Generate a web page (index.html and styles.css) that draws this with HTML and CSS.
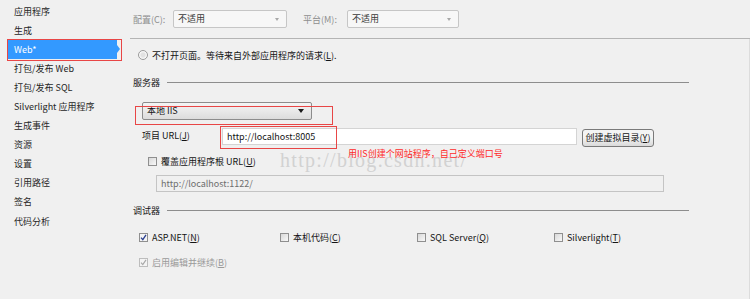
FILE: index.html
```html
<!DOCTYPE html>
<html lang="zh-CN">
<head>
  <meta charset="UTF-8">
  <title>Web 属性</title>
  <link rel="stylesheet" href="styles.css">
</head>
<body>
  <div class="page">
    <ul class="nav">
      <li>应用程序</li>
      <li>生成</li>
      <li class="active">Web*</li>
      <li>打包/发布 Web</li>
      <li>打包/发布 SQL</li>
      <li>Silverlight 应用程序</li>
      <li>生成事件</li>
      <li>资源</li>
      <li>设置</li>
      <li>引用路径</li>
      <li>签名</li>
      <li>代码分析</li>
    </ul>

    <div class="main">
      <div class="topbar">
        <span class="dim-label cfg-label">配置(C):</span>
        <div class="combo combo-off cfg-combo">不适用<span class="caret-off"></span></div>
        <span class="dim-label plat-label">平台(M):</span>
        <div class="combo combo-off plat-combo">不适用<span class="caret-off"></span></div>
      </div>

      <div class="pane">
        <div class="row radio-row"><span class="radio"></span>不打开页面。等待来自外部应用程序的请求(<u>L</u>).</div>

        <div class="group server-group"><span>服务器</span><div class="rule"></div></div>

        <div class="combo server-combo">本地 IIS<span class="caret"></span></div>

        <div class="url-row">
          <span class="url-label">项目 URL(<u>J</u>)</span>
          <div class="textbox url-box">http://localhost:8005</div>
          <div class="btn">创建虚拟目录(<u>Y</u>)</div>
        </div>

        <div class="row override-row"><span class="check"></span>覆盖应用程序根 URL(<u>U</u>)</div>

        <div class="textbox textbox-off root-box">http://localhost:1122/</div>

        <div class="group debug-group"><span>调试器</span><div class="rule"></div></div>

        <div class="debuggers">
          <div class="row"><span class="check check-on"><svg viewBox="0 0 9 9" width="9" height="9"><polyline points="2,4.6 3.8,6.6 7,1.8" fill="none" stroke="#2b3f8f" stroke-width="1.3"/></svg></span>ASP.NET(<u>N</u>)</div>
          <div class="row"><span class="check"></span>本机代码(<u>C</u>)</div>
          <div class="row"><span class="check"></span>SQL Server(<u>Q</u>)</div>
          <div class="row"><span class="check"></span>Silverlight(<u>T</u>)</div>
        </div>

        <div class="row row-off edit-row"><span class="check check-dis"><svg viewBox="0 0 9 9" width="9" height="9"><polyline points="2,4.6 3.8,6.6 7,1.8" fill="none" stroke="#a8a8a8" stroke-width="1.2"/></svg></span>启用编辑并继续(<u>B</u>)</div>
      </div>
    </div>

    <!-- annotations drawn over the screenshot -->
    <div class="mark mark-server"></div>
    <div class="mark mark-url"></div>
    <div class="watermark">http://blog.csdn.net/</div>
    <div class="note">用IIS创建个网站程序，自己定义端口号</div>
  </div>
</body>
</html>
```

FILE: styles.css
```css
body {
  margin: 0;
  background: #f0f0f0;
  font-family: "Noto Sans CJK SC", "Noto Sans", sans-serif;
  font-size: 9px;
  color: #141414;
}

.page {
  position: relative;
  display: flex;
  width: 750px;
  height: 299px;
  overflow: hidden;
}

/* left navigation */
.nav {
  list-style: none;
  margin: 0;
  padding: 1.5px 0 0;
  width: 130px;
  flex: none;
}

.nav li {
  height: 19.1px;
  line-height: 19.1px;
  padding-left: 14px;
  color: #262626;
  white-space: nowrap;
}

.nav li.active {
  position: relative;
  margin: 0 13px 0 8px;
  padding-left: 6px;
  background: #3399ff;
  color: #fff;
}

.nav li.active::before {
  content: "";
  position: absolute;
  right: -3px;
  top: 50%;
  margin-top: -4px;
  border-left: 3px solid #3399ff;
  border-top: 4px solid transparent;
  border-bottom: 4px solid transparent;
}

.nav li.active::after {
  content: "";
  position: absolute;
  left: -1px;
  right: -5px;
  top: -1px;
  bottom: -2px;
  border: 1.5px solid #e84646;
}

/* main area */
.main {
  flex: 1;
  display: flex;
  flex-direction: column;
}

.topbar {
  height: 38px;
  display: flex;
  align-items: center;
  padding-left: 3px;
  border-bottom: 1px solid #b4b4b4;
}

.dim-label {
  color: #8e8e8e;
}

.cfg-label { width: 40px; }
.plat-label { width: 44px; margin-left: 16px; }

.combo {
  position: relative;
  box-sizing: border-box;
  height: 18px;
  line-height: 16px;
  padding-left: 4px;
  border: 1px solid #8c8c8c;
  border-radius: 2px;
  background: linear-gradient(#f5f5f5, #dcdcdc);
}

.combo-off {
  border-color: #c6c6c6;
  background: #f7f7f7;
  color: #3a3a3a;
}

.cfg-combo { width: 114px; }
.plat-combo { width: 112px; }

.caret-off, .caret {
  position: absolute;
  right: 7px;
  top: 7px;
  border-top: 3px solid #a8a8a8;
  border-left: 2.5px solid transparent;
  border-right: 2.5px solid transparent;
}

.caret {
  top: 6px;
  border-top: 4px solid #1a1a1a;
  border-left: 3.5px solid transparent;
  border-right: 3.5px solid transparent;
}

.pane {
  flex: 1;
  display: flex;
  flex-direction: column;
  border-right: 1px solid #dcdcdc;
}

.row {
  display: flex;
  align-items: center;
  height: 16px;
  white-space: nowrap;
}

.row-off {
  color: #9a9a9a;
}

.radio-row {
  margin-top: 8px;
  padding-left: 8px;
}

.radio {
  width: 10px;
  height: 10px;
  box-sizing: border-box;
  border: 1px solid #9a9a9a;
  border-radius: 50%;
  background: radial-gradient(circle, #e2e2e2 0 35%, #f8f8f8 60%);
  margin-right: 4px;
}

.group {
  display: flex;
  align-items: center;
  height: 16px;
  padding-left: 3px;
  margin-right: 60px;
}

.group .rule {
  flex: 1;
  margin-left: 7px;
  border-top: 1px solid #8d8d8d;
}

.server-group { margin-top: 11px; }

.server-combo {
  margin: 12px 0 0 12px;
  width: 170px;
}

.url-row {
  display: flex;
  align-items: flex-start;
  height: 21px;
  margin-top: 7px;
  padding-left: 12px;
}

.url-label {
  width: 80px;
  line-height: 15px;
  margin-top: 1px;
}

.textbox {
  box-sizing: border-box;
  height: 17px;
  line-height: 15px;
  padding-left: 4px;
  border: 1px solid #d4d4d4;
  background: #fff;
  white-space: nowrap;
}

.url-box {
  width: 355px;
  margin-top: 1px;
}

.textbox-off {
  background: #f0f0f0;
  border-color: #c4c4c4;
  color: #6e6e6e;
}

.btn {
  box-sizing: border-box;
  width: 72px;
  height: 18px;
  line-height: 16px;
  margin: 2px 0 0 5px;
  text-align: center;
  border: 1px solid #7a7a7a;
  border-radius: 3px;
  background: linear-gradient(#f4f4f4 45%, #dadada);
}

.override-row {
  margin-top: 5px;
  padding-left: 18px;
}

.check {
  width: 9px;
  height: 9px;
  box-sizing: border-box;
  flex: none;
  border: 1px solid #8f8f8f;
  background: linear-gradient(135deg, #d8d8d8, #f8f8f8);
  margin-right: 4px;
  position: relative;
}

.check svg {
  position: absolute;
  left: -1px;
  top: -1px;
}

.check-on {
  background: #f4f4f4;
}

.check-dis {
  border-color: #bdbdbd;
  background: #f4f4f4;
}

.root-box {
  width: 508px;
  margin: 6px 0 0 26px;
}

.debug-group { margin-top: 10px; }

.debuggers {
  display: grid;
  grid-template-columns: 141px 137px 137px auto;
  margin-top: 11px;
  padding-left: 9px;
}

.edit-row {
  margin-top: 9px;
  padding-left: 9px;
}

/* annotations */
.mark {
  position: absolute;
  border: 1.5px solid #e84646;
}

.mark-server {
  left: 135px;
  top: 106px;
  width: 196px;
  height: 17px;
}

.mark-url {
  left: 220px;
  top: 126px;
  width: 115px;
  height: 21px;
}

.note {
  position: absolute;
  left: 348px;
  top: 147px;
  line-height: 14px;
  color: #ff2a2a;
  white-space: nowrap;
}

.watermark {
  position: absolute;
  left: 280px;
  top: 149px;
  font-family: "Liberation Serif", serif;
  font-size: 20px;
  letter-spacing: 1.3px;
  color: #d2d2d2;
  white-space: nowrap;
}

u {
  text-decoration-thickness: 1px;
  text-underline-offset: 1px;
}
```
